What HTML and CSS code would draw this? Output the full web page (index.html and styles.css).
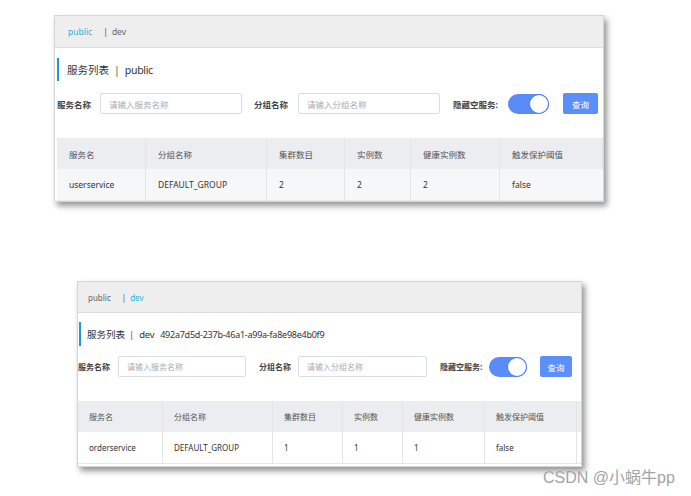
FILE: index.html
```html
<!DOCTYPE html>
<html lang="zh-CN">
<head>
<meta charset="utf-8">
<title>服务列表</title>
<link rel="stylesheet" href="styles.css">
</head>
<body>
<div class="page">
  <section class="shot shot-a">
    <div class="tabs">
      <span class="tab active">public</span>
      <span class="sep">|</span>
      <span class="tab">dev</span>
    </div>
    <div class="title"><span class="bar"></span><span class="title-text">服务列表</span><span class="pipe">|</span><span class="ns">public</span></div>
    <div class="filters">
      <label class="lbl l1">服务名称</label>
      <div class="input i1">请输入服务名称</div>
      <label class="lbl l2">分组名称</label>
      <div class="input i2">请输入分组名称</div>
      <label class="lbl l3">隐藏空服务:</label>
      <div class="toggle"><span class="knob"></span></div>
      <button class="btn">查询</button>
    </div>
    <div class="table grid-a">
      <div class="th">服务名</div><div class="th">分组名称</div><div class="th">集群数目</div><div class="th">实例数</div><div class="th">健康实例数</div><div class="th">触发保护阈值</div>
      <div class="td">userservice</div><div class="td">DEFAULT_GROUP</div><div class="td">2</div><div class="td">2</div><div class="td">2</div><div class="td">false</div>
    </div>
  </section>

  <section class="shot shot-b">
    <div class="tabs">
      <span class="tab">public</span>
      <span class="sep">|</span>
      <span class="tab active">dev</span>
    </div>
    <div class="title"><span class="bar"></span><span class="title-text">服务列表</span><span class="pipe">|</span><span class="ns">dev</span><span class="ns-id">492a7d5d-237b-46a1-a99a-fa8e98e4b0f9</span></div>
    <div class="filters">
      <label class="lbl l1">服务名称</label>
      <div class="input i1">请输入服务名称</div>
      <label class="lbl l2">分组名称</label>
      <div class="input i2">请输入分组名称</div>
      <label class="lbl l3">隐藏空服务:</label>
      <div class="toggle"><span class="knob"></span></div>
      <button class="btn">查询</button>
    </div>
    <div class="table grid-b">
      <div class="th">服务名</div><div class="th">分组名称</div><div class="th">集群数目</div><div class="th">实例数</div><div class="th">健康实例数</div><div class="th">触发保护阈值</div><div class="th"></div>
      <div class="td">orderservice</div><div class="td">DEFAULT_GROUP</div><div class="td">1</div><div class="td">1</div><div class="td">1</div><div class="td">false</div><div class="td"></div>
    </div>
  </section>

  <div class="watermark">CSDN @小蜗牛pp</div>
</div>
</body>
</html>
```

FILE: styles.css
```css
* { box-sizing: border-box; }

body {
  margin: 0;
  background: #ffffff;
  font-family: "Noto Sans", "Noto Sans CJK SC", sans-serif;
  color: #333;
}

.page {
  display: flex;
  flex-direction: column;
  align-items: flex-start;
  padding-top: 15px;
}

.shot {
  background: #fff;
  border: 1px solid #d6d6d6;
  box-shadow: 3px 4px 6px rgba(0, 0, 0, 0.42);
  display: flex;
  flex-direction: column;
  overflow: hidden;
}

.shot-a { margin-left: 54px; width: 550px; height: 187px; }
.shot-b { margin-left: 77px; margin-top: 79px; width: 505px; height: 186px; }

/* namespace tabs */
.tabs {
  height: 32px;
  flex: none;
  background: #eeeeee;
  border-bottom: 1px solid #dcdcdc;
  display: flex;
  align-items: center;
  font-size: 8.5px;
  color: #666;
}
.shot-a .tabs { padding-left: 13px; }
.shot-b .tabs { height: 31px; padding-left: 10px; font-size: 8px; }
.tab.active { color: #2fb2d6; }
.tabs .sep { margin-left: 11px; margin-right: 4px; color: #555; }

/* title */
.title {
  display: flex;
  align-items: center;
  height: 23px;
  margin-top: 10px;
  font-size: 10.5px;
  color: #333;
}
.title .bar {
  width: 2px;
  height: 23px;
  background: #1d98d3;
  margin-right: 8px;
}
.title .ns, .title .ns-id { letter-spacing: -0.3px; }
.shot-a .title { padding-left: 2px; }
.shot-b .title { padding-left: 1px; margin-top: 9px; height: 24px; font-size: 9.5px; }
.shot-b .title .bar { height: 24px; margin-right: 6px; }
.title .pipe { margin: 0 5px 0 5px; color: #555; }
.shot-b .title .pipe { margin: 0 5px 0 4px; }
.title .ns-id { margin-left: 6px; font-size: 9px; letter-spacing: -0.25px; }

/* filters */
.filters {
  display: flex;
  align-items: center;
  height: 21px;
  margin-top: 12px;
  font-size: 8.5px;
}
.shot-a .filters { padding-left: 2px; }
.shot-b .filters { padding-left: 0; margin-top: 10px; font-size: 8px; }

.lbl {
  font-weight: 700;
  color: #444;
  white-space: nowrap;
}
.input {
  height: 21px;
  border: 1px solid #d9dce2;
  border-radius: 2px;
  color: #a9abb0;
  display: flex;
  align-items: center;
  padding-left: 8px;
  white-space: nowrap;
  overflow: hidden;
}
.shot-a .l1 { width: 35px; }
.shot-a .i1 { width: 142px; margin-left: 8px; }
.shot-a .l2 { width: 36px; margin-left: 12px; }
.shot-a .i2 { width: 142px; margin-left: 8px; }
.shot-a .l3 { width: 47px; margin-left: 13px; }
.shot-a .toggle { width: 41px; margin-left: 8px; }
.shot-a .btn { width: 35px; margin-left: 14px; }

.shot-b .l1 { width: 32px; }
.shot-b .i1 { width: 128px; margin-left: 8px; }
.shot-b .l2 { width: 31px; margin-left: 13px; }
.shot-b .i2 { width: 129px; margin-left: 8px; }
.shot-b .l3 { width: 42px; margin-left: 13px; }
.shot-b .toggle { width: 38px; margin-left: 7px; }
.shot-b .btn { width: 32px; margin-left: 13px; }

.toggle {
  height: 20px;
  border-radius: 10px;
  background: #5a8cf7;
  position: relative;
  flex: none;
}
.knob {
  position: absolute;
  right: 1px;
  top: 1px;
  width: 18px;
  height: 18px;
  border-radius: 50%;
  background: #fff;
  box-shadow: 0 0 0 1px #4e7ff0;
}
.btn {
  height: 21px;
  border: none;
  border-radius: 2px;
  background: #5b8ff9;
  color: #fff;
  font-family: inherit;
  font-size: 8.5px;
  padding: 0;
  flex: none;
}

/* table */
.table {
  display: grid;
  margin-top: 24px;
  font-size: 8.5px;
  color: #333;
}
.shot-a .table { margin-left: 2px; grid-template-columns: 89px 121px 78px 66px 89px 1fr; grid-template-rows: 31px 32px; }
.shot-b .table { margin-left: 0; margin-top: 24px; grid-template-columns: 85px 110px 70px 60px 82px 92px 1fr; grid-template-rows: 31px 32px; font-size: 8px; }

.th, .td {
  display: flex;
  align-items: center;
  padding-left: 12px;
  border-right: 1px solid #e2e4e8;
  white-space: nowrap;
}
.shot-b .th, .shot-b .td { padding-left: 11px; }
.th { background: #ebedf0; color: #555; }
.td { border-bottom: 1px solid #e6e8eb; }
.shot-a .td { background: #f6f7f9; }
.shot-b .td { background: #fff; }
.th:last-child, .td:last-child { border-right: none; }

.watermark {
  margin-left: 543px;
  margin-top: 2px;
  font-family: "Liberation Sans", "Noto Sans CJK SC", sans-serif;
  font-size: 16px;
  line-height: 18px;
  color: #a3a3a3;
  text-shadow: 0 0 1px #fff;
  white-space: nowrap;
}
```
